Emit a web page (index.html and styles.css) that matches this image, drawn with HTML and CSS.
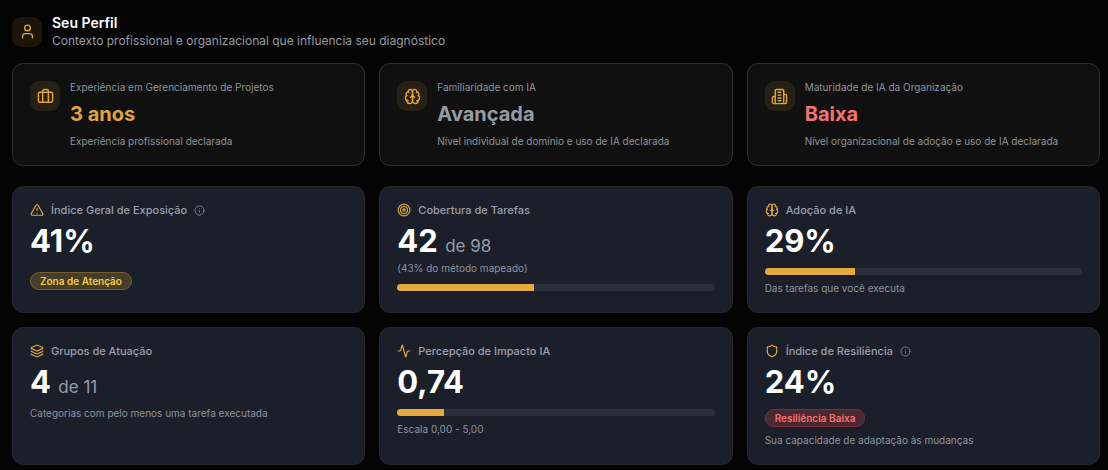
FILE: index.html
```html
<!DOCTYPE html>
<html lang="pt-BR">
<head>
<meta charset="utf-8">
<meta name="viewport" content="width=device-width, initial-scale=1">
<title>Seu Perfil</title>
<link rel="stylesheet" href="styles.css">
</head>
<body>
<svg class="sprite" aria-hidden="true">
  <symbol id="user" viewBox="0 0 24 24"><path d="M19 21v-2a4 4 0 0 0-4-4H9a4 4 0 0 0-4 4v2"/><circle cx="12" cy="7" r="4"/></symbol>
  <symbol id="briefcase" viewBox="0 0 24 24"><path d="M16 20V4a2 2 0 0 0-2-2h-4a2 2 0 0 0-2 2v16"/><rect width="20" height="14" x="2" y="6" rx="2"/></symbol>
  <symbol id="brain" viewBox="0 0 24 24"><path d="M12 5a3 3 0 1 0-5.997.125 4 4 0 0 0-2.526 5.77 4 4 0 0 0 .556 6.588A4 4 0 1 0 12 18Z"/><path d="M12 5a3 3 0 1 1 5.997.125 4 4 0 0 1 2.526 5.77 4 4 0 0 1-.556 6.588A4 4 0 1 1 12 18Z"/><path d="M15 13a4.5 4.5 0 0 1-3-4 4.5 4.5 0 0 1-3 4"/><path d="M17.599 6.5a3 3 0 0 0 .399-1.375"/><path d="M6.003 5.125A3 3 0 0 0 6.401 6.5"/><path d="M3.477 10.896a4 4 0 0 1 .585-.396"/><path d="M19.938 10.5a4 4 0 0 1 .585.396"/><path d="M6 18a4 4 0 0 1-1.967-.516"/><path d="M19.967 17.484A4 4 0 0 1 18 18"/></symbol>
  <symbol id="building" viewBox="0 0 24 24"><path d="M6 22V4a2 2 0 0 1 2-2h8a2 2 0 0 1 2 2v18Z"/><path d="M6 12H4a2 2 0 0 0-2 2v6a2 2 0 0 0 2 2h2"/><path d="M18 9h2a2 2 0 0 1 2 2v9a2 2 0 0 1-2 2h-2"/><path d="M10 6h4M10 10h4M10 14h4M10 18h4"/></symbol>
  <symbol id="alert" viewBox="0 0 24 24"><path d="m21.73 18-8-14a2 2 0 0 0-3.48 0l-8 14A2 2 0 0 0 4 21h16a2 2 0 0 0 1.73-3"/><path d="M12 9v4M12 17h.01"/></symbol>
  <symbol id="target" viewBox="0 0 24 24"><circle cx="12" cy="12" r="10"/><circle cx="12" cy="12" r="6"/><circle cx="12" cy="12" r="2"/></symbol>
  <symbol id="layers" viewBox="0 0 24 24"><path d="M12.83 2.18a2 2 0 0 0-1.66 0L2.6 6.08a1 1 0 0 0 0 1.83l8.58 3.91a2 2 0 0 0 1.66 0l8.58-3.9a1 1 0 0 0 0-1.83z"/><path d="M2 12a1 1 0 0 0 .58.91l8.6 3.91a2 2 0 0 0 1.65 0l8.58-3.9A1 1 0 0 0 22 12"/><path d="M2 17a1 1 0 0 0 .58.91l8.6 3.91a2 2 0 0 0 1.65 0l8.58-3.9A1 1 0 0 0 22 17"/></symbol>
  <symbol id="activity" viewBox="0 0 24 24"><path d="M22 12h-2.48a2 2 0 0 0-1.93 1.46l-2.35 8.36a.25.25 0 0 1-.48 0L9.24 2.18a.25.25 0 0 0-.48 0l-2.35 8.36A2 2 0 0 1 4.49 12H2"/></symbol>
  <symbol id="shield" viewBox="0 0 24 24"><path d="M20 13c0 5-3.5 7.5-7.66 8.95a1 1 0 0 1-.67-.01C7.5 20.5 4 18 4 13V6a1 1 0 0 1 1-1c2 0 4.5-1.2 6.24-2.72a1.17 1.17 0 0 1 1.52 0C14.51 3.81 17 5 19 5a1 1 0 0 1 1 1z"/></symbol>
  <symbol id="info" viewBox="0 0 24 24"><circle cx="12" cy="12" r="10"/><path d="M12 16v-4M12 8h.01"/></symbol>
</svg>

<main class="page">
  <header class="page-header">
    <span class="icon-tile"><svg class="icon icon-md"><use href="#user"/></svg></span>
    <div>
      <h1 class="page-title">Seu Perfil</h1>
      <p class="page-subtitle">Contexto profissional e organizacional que influencia seu diagnóstico</p>
    </div>
  </header>

  <section class="grid profile-grid">
    <article class="card profile-card">
      <span class="icon-tile"><svg class="icon icon-md"><use href="#briefcase"/></svg></span>
      <div class="profile-body">
        <h2 class="small-text">Experiência em Gerenciamento de Projetos</h2>
        <p class="profile-value value-amber">3 anos</p>
        <p class="small-text">Experiência profissional declarada</p>
      </div>
    </article>
    <article class="card profile-card">
      <span class="icon-tile"><svg class="icon icon-md"><use href="#brain"/></svg></span>
      <div class="profile-body">
        <h2 class="small-text">Familiaridade com IA</h2>
        <p class="profile-value value-gray">Avançada</p>
        <p class="small-text">Nível individual de domínio e uso de IA declarada</p>
      </div>
    </article>
    <article class="card profile-card">
      <span class="icon-tile"><svg class="icon icon-md"><use href="#building"/></svg></span>
      <div class="profile-body">
        <h2 class="small-text">Maturidade de IA da Organização</h2>
        <p class="profile-value value-red">Baixa</p>
        <p class="small-text">Nível organizacional de adoção e uso de IA declarada</p>
      </div>
    </article>
  </section>

  <section class="grid">
    <article class="card metric-card">
      <div class="metric-head"><svg class="icon icon-sm"><use href="#alert"/></svg><h2 class="metric-title">Índice Geral de Exposição</h2><button class="info-button" type="button" aria-label="Sobre o Índice Geral de Exposição"><svg class="icon icon-xs"><use href="#info"/></svg></button></div>
      <p class="metric-value">41%</p>
      <span class="badge badge-yellow badge-spaced">Zona de Atenção</span>
    </article>
    <article class="card metric-card">
      <div class="metric-head"><svg class="icon icon-sm"><use href="#target"/></svg><h2 class="metric-title">Cobertura de Tarefas</h2></div>
      <p class="metric-value">42 <span class="metric-total">de 98</span></p>
      <p class="small-text note-tight">(43% do método mapeado)</p>
      <div class="bar" role="progressbar" aria-label="Cobertura de Tarefas" aria-valuenow="43"><div class="bar-fill" style="width: 43%"></div></div>
    </article>
    <article class="card metric-card">
      <div class="metric-head"><svg class="icon icon-sm"><use href="#brain"/></svg><h2 class="metric-title">Adoção de IA</h2></div>
      <p class="metric-value">29%</p>
      <div class="bar" role="progressbar" aria-label="Adoção de IA" aria-valuenow="29"><div class="bar-fill" style="width: 28.6%"></div></div>
      <p class="small-text note">Das tarefas que você executa</p>
    </article>
    <article class="card metric-card">
      <div class="metric-head"><svg class="icon icon-sm"><use href="#layers"/></svg><h2 class="metric-title">Grupos de Atuação</h2></div>
      <p class="metric-value">4 <span class="metric-total">de 11</span></p>
      <p class="small-text note">Categorias com pelo menos uma tarefa executada</p>
    </article>
    <article class="card metric-card">
      <div class="metric-head"><svg class="icon icon-sm"><use href="#activity"/></svg><h2 class="metric-title">Percepção de Impacto IA</h2></div>
      <p class="metric-value">0,74</p>
      <div class="bar" role="progressbar" aria-label="Percepção de Impacto IA" aria-valuemax="5" aria-valuenow="0.74"><div class="bar-fill" style="width: 14.8%"></div></div>
      <p class="small-text note">Escala 0,00 - 5,00</p>
    </article>
    <article class="card metric-card">
      <div class="metric-head"><svg class="icon icon-sm"><use href="#shield"/></svg><h2 class="metric-title">Índice de Resiliência</h2><button class="info-button" type="button" aria-label="Sobre o Índice de Resiliência"><svg class="icon icon-xs"><use href="#info"/></svg></button></div>
      <p class="metric-value">24%</p>
      <span class="badge badge-red">Resiliência Baixa</span>
      <p class="small-text note">Sua capacidade de adaptação às mudanças</p>
    </article>
  </section>
</main>
</body>
</html>
```
FILE: styles.css
```css
* {
  box-sizing: border-box;
}

body {
  margin: 0;
  background: #040404;
  color: #fff;
  font-family: Inter, "Liberation Sans", sans-serif;
}

h1, h2, p {
  margin: 0;
}

.sprite {
  display: none;
}

.page {
  padding: 13px 8px 5px 12px;
}

.page-header {
  display: flex;
  align-items: center;
  gap: 10px;
  margin-bottom: 13px;
}

.page-title {
  font-size: 14px;
  line-height: 19px;
  font-weight: 600;
}

.page-subtitle {
  color: #969ca5;
  font-size: 12px;
  line-height: 18px;
}

.icon {
  flex: none;
  fill: none;
  stroke: currentColor;
  stroke-width: 2;
  stroke-linecap: round;
  stroke-linejoin: round;
}

.icon-md {
  width: 17px;
  height: 17px;
}

.icon-sm {
  width: 14px;
  height: 14px;
  color: #e2a53c;
}

.icon-xs {
  width: 11px;
  height: 11px;
}

.icon-tile {
  display: flex;
  flex: none;
  align-items: center;
  justify-content: center;
  width: 30px;
  height: 30px;
  border-radius: 9px;
  background: rgba(230, 168, 60, 0.11);
  color: #e2a53c;
}

.grid {
  display: grid;
  grid-template-columns: repeat(3, minmax(0, 1fr));
  gap: 14px;
}

.profile-grid {
  margin-bottom: 20px;
}

.card {
  padding: 17px;
  border: 1px solid #25272d;
  border-radius: 11px;
  background: #1b1f2a;
}

.profile-card {
  display: flex;
  gap: 10px;
  border-color: #2e2e2e;
  background: #101010;
}

.profile-body {
  display: flex;
  flex-direction: column;
  gap: 6px;
}

.small-text {
  color: #8e939d;
  font-size: 10px;
  line-height: 13px;
  font-weight: 400;
}

.profile-value {
  font-size: 20px;
  line-height: 29px;
  font-weight: 700;
}

.value-amber {
  color: #e2a53c;
}

.value-gray {
  color: #969ca5;
}

.value-red {
  color: #f87171;
}

.metric-head {
  display: flex;
  align-items: center;
  gap: 7px;
  height: 12px;
  margin-bottom: 7px;
}

.metric-title {
  color: #9a9fa9;
  font-size: 11px;
  line-height: 12px;
  font-weight: 500;
}

.metric-value {
  font-size: 31px;
  line-height: 36px;
  font-weight: 700;
}

.metric-total {
  color: #969ca5;
  font-size: 17px;
  line-height: 17px;
  font-weight: 400;
}

.info-button {
  display: flex;
  padding: 0;
  border: 0;
  background: none;
  color: #7d828d;
}

.note {
  margin-top: 7px;
}

.note-tight {
  margin-top: 3px;
}

.bar {
  height: 7px;
  margin-top: 9px;
  overflow: hidden;
  border-radius: 4px;
  background: #2c2f3a;
}

.bar-fill {
  height: 100%;
  background: #e5a93f;
}

.badge {
  display: block;
  width: fit-content;
  margin-top: 9px;
  padding: 0 9px;
  border: 1px solid;
  border-radius: 9px;
  font-size: 10px;
  line-height: 16px;
  font-weight: 600;
}

.badge-spaced {
  margin-top: 13px;
}

.badge-yellow {
  border-color: #765f2a;
  background: #463d2a;
  color: #f5cb3d;
}

.badge-red {
  border-color: #7d2d38;
  background: #482831;
  color: #f87171;
}
```
